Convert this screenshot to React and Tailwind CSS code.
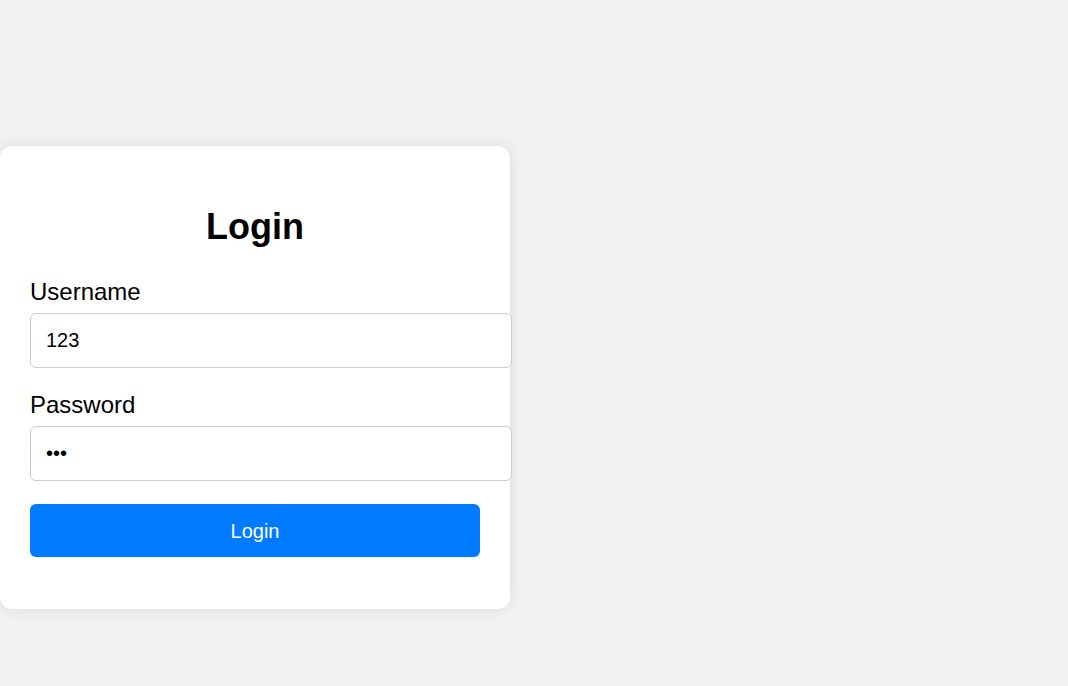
import React from 'react';

export default function App() {
  return (
    <div
      className="min-h-[686px] w-full bg-[#f2f2f2] pt-[146px]"
      style={{ fontFamily: '"Liberation Sans", Arial, sans-serif' }}
    >
      <div className="w-[510px] rounded-[12px] bg-white p-[30px] shadow-[0_0_15px_rgba(0,0,0,0.1)]">
        <h2 className="mt-[30px] mb-[31px] text-center text-[36px] font-bold leading-[41px] text-black">Login</h2>
        <form onSubmit={(e) => e.preventDefault()}>
          <div className="mb-[23px]">
            <label className="mb-[8px] block text-[24px] leading-[27px] text-black">Username</label>
            <input
              type="text"
              defaultValue="123"
              className="block h-[55px] w-[482px] rounded-[6px] border border-[#cccccc] bg-white px-[15px] text-[20px] text-black outline-none"
            />
          </div>
          <div className="mb-[23px]">
            <label className="mb-[8px] block text-[24px] leading-[27px] text-black">Password</label>
            <input
              type="password"
              defaultValue="123"
              className="block h-[55px] w-[482px] rounded-[6px] border border-[#cccccc] bg-white px-[15px] text-[20px] text-black outline-none"
            />
          </div>
          <div className="mb-[22px]">
            <button
              type="submit"
              className="block h-[53px] w-[450px] rounded-[6px] bg-[#007bff] text-[20px] text-white"
            >
              Login
            </button>
          </div>
        </form>
      </div>
    </div>
  );
}
